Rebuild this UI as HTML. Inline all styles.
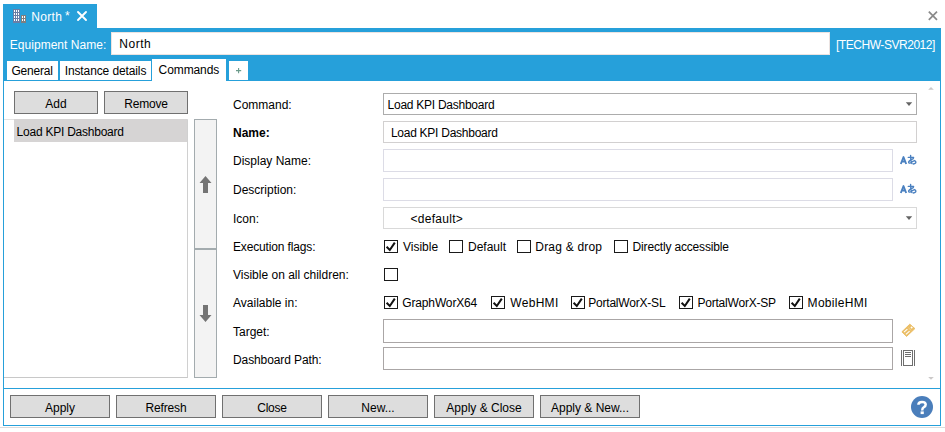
<!DOCTYPE html>
<html><head><meta charset="utf-8">
<style>
*{box-sizing:border-box}
html,body{margin:0;padding:0}
body{width:945px;height:432px;overflow:hidden;position:relative;background:#fff;font-family:"Liberation Sans",sans-serif;font-size:12px;color:#000}
.a{position:absolute}
.t{position:absolute;font-size:12px;line-height:14px;white-space:pre;height:14px}
.w{color:#fff}
.blue{background:#26a0da}
.btn{position:absolute;background:#dddddd;border:1px solid #707070;height:23px}
.btn span{position:absolute;left:0;right:0;top:5px;text-align:center;line-height:14px;white-space:pre}
.inp{position:absolute;background:#fff;border:1px solid #d9d9d9}
.cb{position:absolute;width:14px;height:13px;border:1px solid #1a1a1a;background:#fff}
</style></head><body>

<!-- document tab -->
<div class="a blue" style="left:3px;top:4px;width:94px;height:24px"></div>
<svg class="a" style="left:13px;top:9px" width="14" height="14" viewBox="0 0 14 14">
 <rect x="0" y="0" width="7" height="14" fill="#6b7ea6"/>
 <g fill="#fff">
  <rect x="1" y="1" width="1" height="2"/><rect x="3" y="1" width="1" height="2"/><rect x="5" y="1" width="1" height="2"/>
  <rect x="1" y="4" width="1" height="2"/><rect x="3" y="4" width="1" height="2"/><rect x="5" y="4" width="1" height="2"/>
  <rect x="1" y="7" width="1" height="2"/><rect x="3" y="7" width="1" height="2"/><rect x="5" y="7" width="1" height="2"/>
  <rect x="1" y="10" width="1" height="2"/><rect x="3" y="10" width="1" height="2"/><rect x="5" y="10" width="1" height="2"/>
 </g>
 <rect x="8" y="6" width="5" height="8" fill="#7f7f7f"/>
 <g fill="#fff">
  <rect x="9" y="7" width="1" height="2"/><rect x="11" y="7" width="1" height="2"/>
  <rect x="9" y="10" width="1" height="2"/><rect x="11" y="10" width="1" height="2"/>
 </g>
</svg>
<div class="t w" style="left:31.3px;top:10px;letter-spacing:0.3px">North</div>
<div class="t w" style="left:65px;top:9px">*</div>
<svg class="a" style="left:76px;top:10px" width="12" height="12" viewBox="0 0 12 12">
 <path d="M2 2L10 10M10 2L2 10" stroke="#fff" stroke-width="1.9" stroke-linecap="round"/>
</svg>

<!-- window close -->
<svg class="a" style="left:927px;top:10px" width="12" height="12" viewBox="0 0 12 12">
 <path d="M1.8 1.6L10 9.9M10 1.6L1.8 9.9" stroke="#8a8a8a" stroke-width="1.7"/>
</svg>

<!-- header bar -->
<div class="a blue" style="left:3px;top:28px;width:938px;height:53px"></div>
<div class="t w" style="left:9.8px;top:38px;letter-spacing:0.03px">Equipment Name:</div>
<div class="a" style="left:111px;top:32px;width:719px;height:23px;background:#fff;border:1px solid #ebe3e1"></div>
<div class="t" style="left:119.3px;top:37px;letter-spacing:0.5px">North</div>
<div class="t w" style="left:836px;top:38px;letter-spacing:-0.46px">[TECHW-SVR2012]</div>

<!-- tabs -->
<div class="a" style="left:7px;top:61px;width:51px;height:19px;background:#fff"></div>
<div class="t" style="left:11.4px;top:64px;letter-spacing:-0.2px">General</div>
<div class="a" style="left:60px;top:61px;width:91px;height:19px;background:#fff"></div>
<div class="t" style="left:64.7px;top:64px;letter-spacing:-0.11px">Instance details</div>
<div class="a" style="left:152px;top:59px;width:74px;height:22px;background:#fff"></div>
<div class="t" style="left:158.6px;top:63px;letter-spacing:-0.1px">Commands</div>
<div class="a" style="left:229px;top:61px;width:19px;height:19px;background:#fff"></div>

<!-- content frame -->
<div class="a" style="left:3px;top:80px;width:938px;height:346px;border:1px solid #26a0da;border-top:none"></div>
<div class="a" style="left:3px;top:80px;width:149px;height:1px;background:#26a0da"></div>
<div class="a" style="left:226px;top:80px;width:715px;height:1px;background:#26a0da"></div>
<div class="a" style="left:0;top:427px;width:945px;height:1px;background:#dcdcdc"></div>

<!-- left list -->
<div class="btn" style="left:14px;top:91px;width:84px"><span>Add</span></div>
<div class="btn" style="left:104px;top:91px;width:84px"><span style="letter-spacing:-0.2px">Remove</span></div>
<div class="a" style="left:4px;top:119px;width:184px;height:259px;border-top:1px solid #e3e3e3;border-right:1px solid #d0d0d0;border-bottom:1px solid #c8c8c8"></div>
<div class="a" style="left:14px;top:119px;width:173px;height:23px;background:#d6d4d4"></div>
<div class="t" style="left:16.6px;top:125px;letter-spacing:-0.24px">Load KPI Dashboard</div>

<!-- up/down -->
<div class="a" style="left:194px;top:119px;width:23px;height:259px;background:#f3f3f3;border:1px solid #a3abae"></div>
<div class="a" style="left:195px;top:248px;width:21px;height:2px;background:#a3abae"></div>

<!-- labels -->
<div class="t" style="left:233px;top:98px">Command:</div>
<div class="t" style="left:233px;top:126px;font-weight:bold">Name:</div>
<div class="t" style="left:233px;top:154px">Display Name:</div>
<div class="t" style="left:233px;top:183px">Description:</div>
<div class="t" style="left:233px;top:212px">Icon:</div>
<div class="t" style="left:233px;top:240px;letter-spacing:-0.15px">Execution flags:</div>
<div class="t" style="left:233px;top:268px">Visible on all children:</div>
<div class="t" style="left:233px;top:296px">Available in:</div>
<div class="t" style="left:233px;top:325px">Target:</div>
<div class="t" style="left:233px;top:353px;letter-spacing:-0.1px">Dashboard Path:</div>

<!-- fields -->
<div class="inp" style="left:383px;top:93px;width:534px;height:22px;border-color:#acacac"></div>
<div class="t" style="left:387.6px;top:98px;letter-spacing:-0.26px">Load KPI Dashboard</div>

<div class="inp" style="left:383px;top:121px;width:534px;height:22px;border-color:#d2d0d0"></div>
<div class="t" style="left:390.9px;top:126px;letter-spacing:-0.26px">Load KPI Dashboard</div>

<div class="inp" style="left:383px;top:149px;width:510px;height:23px;border-color:#dcdce6"></div>
<div class="inp" style="left:383px;top:178px;width:510px;height:23px;border-color:#dcdce6"></div>

<div class="inp" style="left:383px;top:207px;width:534px;height:22px"></div>
<div class="t" style="left:410.5px;top:212px;letter-spacing:0.28px">&lt;default&gt;</div>

<div class="inp" style="left:383px;top:319px;width:510px;height:24px;border-color:#aaa6a6"></div>
<div class="inp" style="left:383px;top:347px;width:510px;height:23px;border-color:#aaa6a6"></div>


<!-- checkboxes -->
<svg class="a" style="left:384px;top:240px" width="14" height="14" viewBox="0 0 14 14"><rect x="0.5" y="0.5" width="13" height="12" fill="#fff" stroke="#1a1a1a"/><path d="M2.6 6.8L5.8 10L10.8 2.6" fill="none" stroke="#111" stroke-width="2"/></svg>
<div class="t" style="left:403px;top:240px">Visible</div>
<svg class="a" style="left:449px;top:240px" width="14" height="14" viewBox="0 0 14 14"><rect x="0.5" y="0.5" width="13" height="12" fill="#fff" stroke="#1a1a1a"/></svg>
<div class="t" style="left:468px;top:240px">Default</div>
<svg class="a" style="left:517px;top:240px" width="14" height="14" viewBox="0 0 14 14"><rect x="0.5" y="0.5" width="13" height="12" fill="#fff" stroke="#1a1a1a"/></svg>
<div class="t" style="left:535.3px;top:240px;letter-spacing:0.2px">Drag &amp; drop</div>
<svg class="a" style="left:614px;top:240px" width="14" height="14" viewBox="0 0 14 14"><rect x="0.5" y="0.5" width="13" height="12" fill="#fff" stroke="#1a1a1a"/></svg>
<div class="t" style="left:632.6px;top:240px;letter-spacing:-0.17px">Directly accessible</div>
<svg class="a" style="left:384px;top:268px" width="14" height="14" viewBox="0 0 14 14"><rect x="0.5" y="0.5" width="13" height="12" fill="#fff" stroke="#1a1a1a"/></svg>
<svg class="a" style="left:384px;top:296px" width="14" height="14" viewBox="0 0 14 14"><rect x="0.5" y="0.5" width="13" height="12" fill="#fff" stroke="#1a1a1a"/><path d="M2.6 6.8L5.8 10L10.8 2.6" fill="none" stroke="#111" stroke-width="2"/></svg>
<div class="t" style="left:402.3px;top:296px;letter-spacing:-0.15px">GraphWorX64</div>
<svg class="a" style="left:491px;top:296px" width="14" height="14" viewBox="0 0 14 14"><rect x="0.5" y="0.5" width="13" height="12" fill="#fff" stroke="#1a1a1a"/><path d="M2.6 6.8L5.8 10L10.8 2.6" fill="none" stroke="#111" stroke-width="2"/></svg>
<div class="t" style="left:510.3px;top:296px;letter-spacing:0.3px">WebHMI</div>
<svg class="a" style="left:571px;top:296px" width="14" height="14" viewBox="0 0 14 14"><rect x="0.5" y="0.5" width="13" height="12" fill="#fff" stroke="#1a1a1a"/><path d="M2.6 6.8L5.8 10L10.8 2.6" fill="none" stroke="#111" stroke-width="2"/></svg>
<div class="t" style="left:588.2px;top:296px;letter-spacing:-0.2px">PortalWorX-SL</div>
<svg class="a" style="left:679px;top:296px" width="14" height="14" viewBox="0 0 14 14"><rect x="0.5" y="0.5" width="13" height="12" fill="#fff" stroke="#1a1a1a"/><path d="M2.6 6.8L5.8 10L10.8 2.6" fill="none" stroke="#111" stroke-width="2"/></svg>
<div class="t" style="left:697.4px;top:296px;letter-spacing:-0.2px">PortalWorX-SP</div>
<svg class="a" style="left:789px;top:296px" width="14" height="14" viewBox="0 0 14 14"><rect x="0.5" y="0.5" width="13" height="12" fill="#fff" stroke="#1a1a1a"/><path d="M2.6 6.8L5.8 10L10.8 2.6" fill="none" stroke="#111" stroke-width="2"/></svg>
<div class="t" style="left:807.6px;top:296px;letter-spacing:0.3px">MobileHMI</div>

<!-- scroll arrows -->
<svg class="a" style="left:0;top:0" width="945" height="432"><path d="M928.2 89.8H933.8L931 86.9Z" fill="#cbc9c9"/><path d="M928.2 377H933.8L931 379.8Z" fill="#cbc9c9"/></svg>


<!-- separator -->
<div class="a" style="left:3px;top:388px;width:938px;height:1px;background:#26a0da"></div>

<!-- bottom buttons -->
<div class="btn" style="left:10px;top:395px;width:100px"><span>Apply</span></div>
<div class="btn" style="left:116px;top:395px;width:100px"><span style="letter-spacing:-0.15px">Refresh</span></div>
<div class="btn" style="left:222px;top:395px;width:100px"><span style="letter-spacing:-0.25px">Close</span></div>
<div class="btn" style="left:328px;top:395px;width:100px"><span>New...</span></div>
<div class="btn" style="left:434px;top:395px;width:100px"><span>Apply &amp; Close</span></div>
<div class="btn" style="left:540px;top:395px;width:100px"><span>Apply &amp; New...</span></div>


<!-- icon overlay -->
<svg class="a" style="left:0;top:0" width="945" height="432" viewBox="0 0 945 432">
 <path d="M236 70.6H241.2M238.6 68V73.2" stroke="#6b9b8b" stroke-width="1.1"/>
 <path d="M905.8 102.2H912.2L909 106Z" fill="#646464"/>
 <path d="M905.8 216.2H912.2L909 220Z" fill="#646464"/>
 <path d="M205.5 176L211.5 183H208V193H203V183H199.5Z" fill="#747474"/>
 <path d="M203 305H208V315H211.5L205.5 322L199.5 315H203Z" fill="#747474"/>
 <g fill="none" stroke="#4a80c0" stroke-width="1.85" stroke-linejoin="round">
  <path d="M900.8 164L903.5 157L906.2 164M901.8 161.5H905.2"/>
  <path d="M900.8 193L903.5 186L906.2 193M901.8 190.5H905.2"/>
 </g>
 <g fill="none" stroke="#4a80c0" stroke-width="1.4" stroke-linecap="round">
  <path d="M908.3 157.4H913.6M910.6 155.4Q910.4 160 911.8 163.4M913.4 158.6Q909.4 160 908.6 162Q908.6 163.8 910.6 162.8Q913 161 914.6 160.6Q916.4 161.6 915.6 163Q914.8 163.8 913.2 164"/>
  <path d="M908.3 186.4H913.6M910.6 184.4Q910.4 189 911.8 192.4M913.4 187.6Q909.4 189 908.6 191Q908.6 192.8 910.6 191.8Q913 190 914.6 189.6Q916.4 190.6 915.6 192Q914.8 192.8 913.2 193"/>
 </g>
 <path d="M909.8 324.2L914.9 328.6L906.6 336.4L901.9 331.8Z" fill="#ebbe66" stroke="#ebbe66" stroke-width="1" stroke-linejoin="round"/>
 <path d="M904 332.2L907.4 329.2M905.9 334.4L909.6 331.2" stroke="#fff" stroke-width="1.1"/>
 <path d="M908.4 327.8L911.2 330.4" stroke="#f6dcaa" stroke-width="0.7"/>
 <circle cx="911.6" cy="327.4" r="1" fill="#fff"/>
 <g fill="none" stroke="#6e6e6e" stroke-width="1">
  <path d="M901.5 350V366M914.5 350V366"/>
  <rect x="903.5" y="350.5" width="9" height="15"/>
  <path d="M905 352.5H911M905 354.5H911M905 356.5H911"/>
 </g>
 <circle cx="922" cy="407" r="11" fill="#4a7ebb"/>
 <path d="M918.4 404.8Q918.4 401.9 922 401.9Q925.7 401.9 925.7 404.6Q925.7 406.3 923.9 407.2Q922.2 408 922.2 410.4" fill="none" stroke="#fff" stroke-width="2.5"/>
 <rect x="920.6" y="411.4" width="3.2" height="2.7" fill="#fff"/>
</svg>
</body></html>
